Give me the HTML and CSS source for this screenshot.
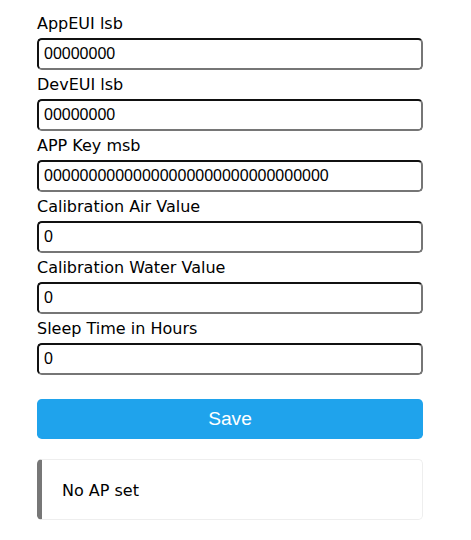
FILE: index.html
```html
<!DOCTYPE html>
<html>
<head>
<meta charset="utf-8">
<link rel="stylesheet" href="styles.css">
</head>
<body>
<div class="wrap">
  <form class="form">
    <label class="field">AppEUI lsb<input class="inp" type="text" value="00000000"></label>
    <label class="field">DevEUI lsb<input class="inp" type="text" value="00000000"></label>
    <label class="field">APP Key msb<input class="inp" type="text" value="00000000000000000000000000000000"></label>
    <label class="field">Calibration Air Value<input class="inp" type="text" value="0"></label>
    <label class="field">Calibration Water Value<input class="inp" type="text" value="0"></label>
    <label class="field">Sleep Time in Hours<input class="inp" type="text" value="0"></label>
    <button class="btn" type="button">Save</button>
  </form>
  <div class="msg">No AP set</div>
</div>
</body>
</html>
```
FILE: styles.css
```css
html, body {
  margin: 0;
  padding: 0;
  background: #fff;
}
body {
  font-family: "DejaVu Sans", Verdana, sans-serif;
  font-size: 16px;
  color: #000;
}
.wrap {
  width: 386px;
  padding: 14px 0 0 37px;
}
.form {
  display: flex;
  flex-direction: column;
}
.field {
  display: flex;
  flex-direction: column;
  line-height: 19px;
}
.inp {
  box-sizing: border-box;
  width: 100%;
  height: 32px;
  margin: 5px 0;
  padding: 5px;
  font-family: "Liberation Sans", Arial, sans-serif;
  font-size: 16px;
  color: #000;
  background: #fff;
  border-radius: 4.8px;
  border-width: 2px;
  border-style: solid;
  border-color: #111 #767676 #767676 #111;
  outline: none;
}
.btn {
  margin-top: 19px;
  height: 40px;
  width: 100%;
  border: 0;
  border-radius: 4.8px;
  background: #1fa3ec;
  color: #fff;
  font-family: "Liberation Sans", Arial, sans-serif;
  font-size: 19.2px;
  line-height: 38px;
  padding: 0;
}
.msg {
  box-sizing: border-box;
  margin-top: 20px;
  padding: 21px 20px 19px;
  line-height: 19px;
  border: 1px solid #eee;
  border-left: 5px solid #777;
  border-radius: 4.8px;
}
```
